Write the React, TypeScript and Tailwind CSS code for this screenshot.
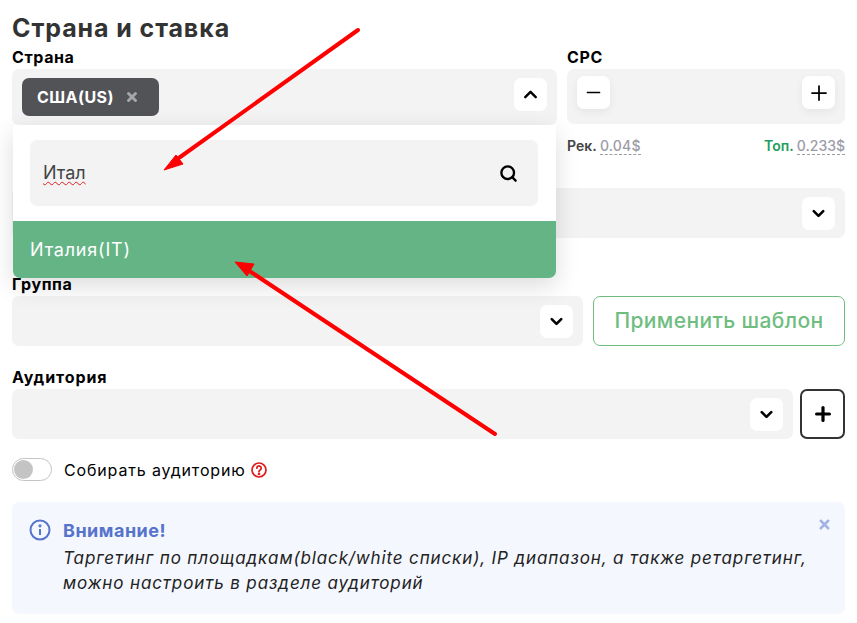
import { ChevronDown, ChevronUp, Minus, Plus, Search, X } from 'lucide-react';

function IconBox({ children, className = '' }: { children: React.ReactNode; className?: string }) {
  return (
    <div className={`flex h-[33px] w-[33px] items-center justify-center rounded-[7px] bg-white text-black ${className}`}>
      {children}
    </div>
  );
}

function SelectField({ className = '' }: { className?: string }) {
  return (
    <div className={`flex h-[50px] items-center justify-end rounded-[7px] bg-[#f3f3f3] pr-[10px] ${className}`}>
      <IconBox>
        <ChevronDown size={19} strokeWidth={3.25} />
      </IconBox>
    </div>
  );
}

export default function App() {
  return (
    <div className="relative h-[623px] w-[857px] overflow-hidden bg-white px-[12px] font-['Inter','Noto_Sans',sans-serif] text-black">
      <h1 className="h-[50px] pt-[12px] text-[25px] leading-[32px] font-bold tracking-[0.9px] text-[#333333]">
        Страна и ставка
      </h1>

      <div className="flex gap-[10px]">
        <div className="w-[545px]">
          <div className="h-[19px] text-[16px] leading-[15px] font-bold tracking-[0.6px]">Страна</div>
          <div className="flex h-[56px] items-start justify-between rounded-[7px] bg-[#f3f3f3] pt-[9px] pr-[10px] pl-[10px]">
            <div className="flex h-[38px] items-center gap-[11px] rounded-[7px] bg-[#525357] pr-[20px] pl-[15px] text-[16px] font-bold tracking-[0.45px] text-white">
              США(US)
              <X size={14} strokeWidth={5} className="text-[#a5a6a9]" />
            </div>
            <IconBox>
              <ChevronUp size={21} strokeWidth={2.75} />
            </IconBox>
          </div>
        </div>
        <div className="flex-1">
          <div className="h-[19px] text-[16px] leading-[15px] font-bold tracking-[0.6px]">CPC</div>
          <div className="flex h-[55px] items-start justify-between rounded-[7px] bg-[#f3f3f3] px-[10px] pt-[7px]">
            <IconBox className="shadow-[0_3px_8px_rgba(0,0,0,0.06)]">
              <Minus size={21} strokeWidth={1.75} />
            </IconBox>
            <IconBox className="shadow-[0_3px_8px_rgba(0,0,0,0.06)]">
              <Plus size={24} strokeWidth={1.75} />
            </IconBox>
          </div>
          <div className="mt-[13px] flex justify-between text-[14px] leading-[17px] font-semibold">
            <span className="text-[#444444]">
              Рек. <span className="border-b border-dashed border-[#9c9ca8] font-medium tracking-[0.2px] text-[#9c9ca8]">0.04$</span>
            </span>
            <span className="text-[#1f9d5c]">
              Топ. <span className="border-b border-dashed border-[#9c9ca8] font-medium text-[#9c9ca8]">0.233$</span>
            </span>
          </div>
        </div>
      </div>

      <SelectField className="mt-[34px]" />
      <div className="mt-[40px] h-[18px] text-[16px] leading-[13px] font-bold tracking-[0.6px]">Группа</div>
      <div className="flex gap-[10px]">
        <SelectField className="w-[571px]" />
        <button className="h-[50px] flex-1 rounded-[7px] border border-[#6fbd7f] bg-white text-[21px] font-medium tracking-[0.4px] text-[#6fbd7f]">
          Применить шаблон
        </button>
      </div>

      <div className="mt-[24px] h-[19px] text-[16px] leading-[15px] font-bold tracking-[0.9px]">Аудитория</div>
      <div className="flex gap-[7px]">
        <SelectField className="w-[781px]" />
        <button className="flex h-[50px] flex-1 items-center justify-center rounded-[7px] border-2 border-[#333333] bg-white">
          <Plus size={22} strokeWidth={3.5} />
        </button>
      </div>

      <div className="mt-[19px] flex h-[23px] items-center gap-[12px]">
        <div className="flex h-[23px] w-[40px] items-center rounded-full border border-[#c4c4c4] bg-white pl-[1px]">
          <div className="h-[19px] w-[19px] rounded-full bg-[#c4c4c4]" />
        </div>
        <span className="text-[16px] font-normal tracking-[0.85px]">Собирать аудиторию</span>
        <svg viewBox="0 0 16 16" className="ml-[-7px] h-[16px] w-[16px]" fill="none" stroke="#e01b1b" strokeWidth="1.7">
          <circle cx="8" cy="8" r="7" />
          <path d="M5.8 6.2a2.2 2.2 0 1 1 3.4 1.8c-.8.5-1.2.9-1.2 1.8" strokeLinecap="round" />
          <circle cx="8" cy="12" r="0.5" fill="#e01b1b" />
        </svg>
      </div>

      <div className="relative mt-[21px] flex h-[112px] gap-[12px] rounded-[7px] bg-[#f4f7fe] pt-[17px] pl-[17px]">
        <svg viewBox="0 0 22 22" className="h-[22px] w-[22px] shrink-0" fill="none" stroke="#5673cc" strokeWidth="2">
          <circle cx="11" cy="11" r="9.5" />
          <path d="M11 10v6" />
          <circle cx="11" cy="6.8" r="0.6" fill="#5673cc" />
        </svg>
        <div>
          <div className="text-[18px] leading-[24px] font-bold tracking-[0.5px] text-[#5673cc]">Внимание!</div>
          <div className="mt-[3px] text-[17px] leading-[25px] font-normal tracking-[0.87px] text-[#222222] italic">
            Таргетинг по площадкам(black/white списки), IP диапазон, а также ретаргетинг,
            <br />
            можно настроить в разделе аудиторий
          </div>
        </div>
        <X size={15} strokeWidth={4} className="absolute top-[15px] right-[13px] text-[#a3b3e3]" />
      </div>

      {/* открытый список стран */}
      <div className="absolute top-[125px] left-[13px] h-[153px] w-[543px] overflow-hidden rounded-b-[7px] bg-white shadow-[0_8px_24px_rgba(0,0,0,0.14)]">
        <div className="mt-[15px] mr-[18px] ml-[17px] flex h-[66px] items-center justify-between rounded-[7px] bg-[#f3f3f3] pr-[20px] pl-[13px]">
          <span className="text-[18px] leading-[24px] text-[#444444] underline decoration-[#e02020] decoration-wavy decoration-1 underline-offset-2">
            Итал
          </span>
          <Search size={19} strokeWidth={3} />
        </div>
        <div className="mt-[15px] flex h-[57px] items-center bg-[#65b486] pl-[17px] text-[18px] tracking-[0.8px] text-white">
          Италия(IT)
        </div>
      </div>

      {/* стрелки поверх скриншота */}
      <svg className="pointer-events-none absolute inset-0" width="857" height="623" viewBox="0 0 857 623">
        <path d="M358 30 L176 160" stroke="#ff0000" strokeWidth="4" strokeLinecap="round" />
        <path d="M164 170 L176 155 L183 164 Z" fill="#ff0000" stroke="#ff0000" strokeWidth="1" />
        <path d="M495 434 L248 270" stroke="#ff0000" strokeWidth="4" strokeLinecap="round" />
        <path d="M235 262 L254 264 L247 276 Z" fill="#ff0000" stroke="#ff0000" strokeWidth="1" />
      </svg>
    </div>
  );
}
